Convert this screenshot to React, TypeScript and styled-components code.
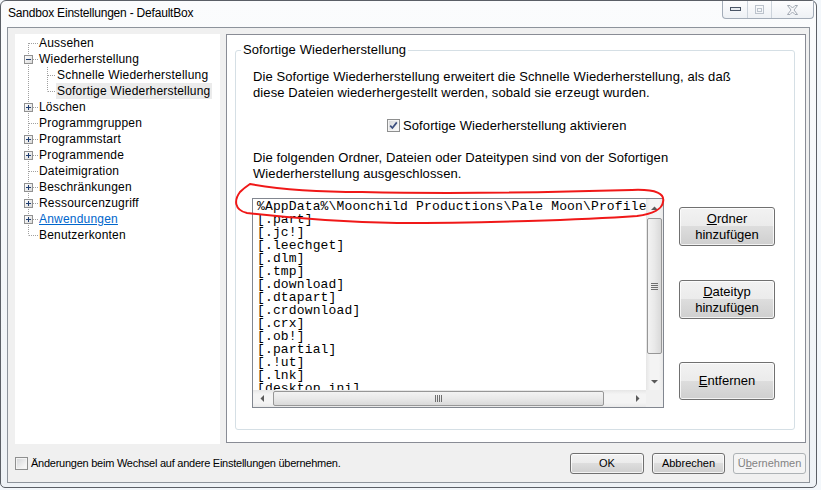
import React from 'react';
import styled, { createGlobalStyle } from 'styled-components';

const GlobalStyle = createGlobalStyle`
    html, body {
        margin: 0;
        padding: 0;
    }
    body {
        width: 821px;
        height: 490px;
        overflow: hidden;
        background: #f3f7fb;
        font-family: 'Liberation Sans', Arial, sans-serif;
        color: #000;
    }
`;

const Window = styled.div`
    width: 817px;
    height: 488px;
    box-sizing: border-box;
    border: 1px solid #5b5f66;
    border-radius: 6px 6px 5px 5px;
    background: linear-gradient(180deg, #fbfcfd 0%, #eef2f6 100%);
    display: flex;
    flex-direction: column;
`;

const TitleBar = styled.div`
    height: 26px;
    flex: none;
    display: flex;
    justify-content: space-between;
    align-items: flex-start;
    padding: 0 2px 0 7px;
`;

const Title = styled.span`
    font-size: 12px;
    letter-spacing: -0.2px;
    line-height: 24px;
`;

const CaptionGroup = styled.div`
    display: flex;
    height: 17px;
    border: 1px solid #a3acb8;
    border-top: none;
    border-radius: 0 0 4px 4px;
    overflow: hidden;
    background: linear-gradient(180deg, #fdfdfe, #eef1f5);
`;

const CaptionButton = styled.div<{ $w: number }>`
    width: ${(p) => p.$w}px;
    display: flex;
    align-items: center;
    justify-content: center;

    & + & {
        border-left: 1px solid #ccd3db;
    }
`;

const Client = styled.div`
    flex: 1;
    margin: 0 6px 4px 6px;
    border: 1px solid #8d939b;
    background: #f0f0f0;
    display: flex;
    flex-direction: column;
`;

const Main = styled.div`
    display: flex;
    align-items: flex-start;
    gap: 6px;
    height: 410px;
    padding: 6px 3px 0 7px;
`;

// 트리 영역
const Tree = styled.ul`
    width: 205px;
    height: 410px;
    flex: none;
    margin: 0;
    padding: 1px 0 0 0;
    box-sizing: border-box;
    list-style: none;
    background: #fff;
`;

const TreeRow = styled.li`
    display: flex;
    height: 16px;
`;

const TreeLabel = styled.span<{ $selected?: boolean; $link?: boolean }>`
    padding: 0 2px 0 1px;
    font-size: 12px;
    letter-spacing: 0.2px;
    line-height: 16px;
    white-space: nowrap;
    background: ${(p) => (p.$selected ? '#ebebeb' : 'transparent')};
    color: ${(p) => (p.$link ? '#0066cc' : '#000')};
    text-decoration: ${(p) => (p.$link ? 'underline' : 'none')};
`;

const Panel = styled.div`
    flex: 1;
    height: 409px;
    box-sizing: border-box;
    border: 1px solid #898c95;
    background: #fff;
    padding: 8px 10px 12px 8px;
`;

const Group = styled.fieldset`
    margin: 0;
    padding: 0;
    min-width: 0;
    height: 100%;
    box-sizing: border-box;
    border: 1px solid #d5dfe5;
    border-radius: 3px;
`;

const Legend = styled.legend`
    margin-left: 5px;
    padding: 0 2px;
    font-size: 13px;
    line-height: 14px;
    letter-spacing: 0.1px;
`;

const GroupBody = styled.div`
    padding: 12px 0 0 17px;
`;

const Text = styled.p<{ $mt?: number }>`
    margin: ${(p) => p.$mt || 0}px 0 0 0;
    font-size: 13px;
    line-height: 16px;
    letter-spacing: 0.1px;
    white-space: nowrap;
`;

const CheckRow = styled.label<{ $mt?: number; $ml?: number }>`
    display: flex;
    align-items: center;
    gap: 3px;
    height: 16px;
    margin: ${(p) => p.$mt || 0}px 0 0 ${(p) => p.$ml || 0}px;
    font-size: 13px;
    letter-spacing: 0.1px;
    white-space: nowrap;
`;

const CheckBox = styled.span`
    width: 13px;
    height: 13px;
    flex: none;
    box-sizing: border-box;
    border: 1px solid #8e8f8f;
    background: linear-gradient(135deg, #d2d4d7 0%, #f2f2f2 70%, #fbfbfb 100%);
    box-shadow: inset 0 0 0 1px #f4f4f4;
    display: flex;
    align-items: center;
    justify-content: center;
`;

const ListRow = styled.div`
    position: relative;
    display: flex;
    gap: 15px;
    margin: 16px 0 0 -1px;
`;

const ListBox = styled.div`
    width: 412px;
    height: 210px;
    box-sizing: border-box;
    border: 1px solid #828790;
    background: #fff;
    display: grid;
    grid-template-columns: 1fr 17px;
    grid-template-rows: 1fr 17px;
`;

const ListItems = styled.div`
    overflow: hidden;
    padding: 1px 0 0 4px;
`;

const ListItem = styled.div`
    font-family: 'Liberation Mono', 'Courier New', monospace;
    font-size: 13px;
    line-height: 13px;
    letter-spacing: 0.15px;
    white-space: nowrap;
`;

const ScrollBar = styled.div<{ $vertical?: boolean }>`
    display: flex;
    flex-direction: ${(p) => (p.$vertical ? 'column' : 'row')};
    background: ${(p) =>
        p.$vertical
            ? 'linear-gradient(90deg, #e6e6e6 0, #f4f4f4 25%, #f4f4f4 75%, #e9e9e9 100%)'
            : 'linear-gradient(180deg, #e6e6e6 0, #f4f4f4 25%, #f4f4f4 75%, #e9e9e9 100%)'};
`;

const ScrollArrow = styled.div`
    width: 17px;
    height: 17px;
    flex: none;
    display: flex;
    align-items: center;
    justify-content: center;
`;

const ScrollTrack = styled.div<{ $vertical?: boolean }>`
    flex: 1;
    display: flex;
    flex-direction: ${(p) => (p.$vertical ? 'column' : 'row')};
    padding: ${(p) => (p.$vertical ? '2px 0 0 0' : '0 0 0 3px')};
`;

const Thumb = styled.div<{ $vertical?: boolean }>`
    box-sizing: border-box;
    border: 1px solid #979797;
    border-radius: 2px;
    display: flex;
    align-items: center;
    justify-content: center;
    ${(p) =>
        p.$vertical
            ? `width: 15px; height: 136px; margin-left: 1px;
               background: linear-gradient(90deg, #f3f3f3 0%, #e9e9e9 50%, #d9d9d9 100%);`
            : `height: 15px; width: 331px; margin-top: 1px;
               background: linear-gradient(180deg, #f3f3f3 0%, #e9e9e9 50%, #d9d9d9 100%);`}
`;

const Corner = styled.div`
    background: #f0f0f0;
`;

const ButtonColumn = styled.div`
    display: flex;
    flex-direction: column;
    padding-top: 9px;
`;

const Button = styled.button<{ $w: number; $h: number; $mt?: number; $small?: boolean }>`
    width: ${(p) => p.$w}px;
    height: ${(p) => p.$h}px;
    margin-top: ${(p) => p.$mt || 0}px;
    padding: 0;
    box-sizing: border-box;
    border: 1px solid #707070;
    border-radius: 3px;
    background: linear-gradient(180deg, #f2f2f2 0%, #ebebeb 50%, #dddddd 50%, #cfcfcf 100%);
    box-shadow: inset 0 0 0 1px rgba(255, 255, 255, 0.75);
    font-family: 'Liberation Sans', Arial, sans-serif;
    font-size: ${(p) => (p.$small ? 11 : 13)}px;
    line-height: 16px;
    color: #000;

    &:disabled {
        border-color: #adb2b5;
        background: #f4f4f4;
        box-shadow: none;
        color: #838383;
    }
`;

const BottomBar = styled.div`
    display: flex;
    align-items: center;
    height: 38px;
    padding: 0 3px 0 7px;
`;

const BottomLabel = styled.label`
    display: flex;
    align-items: center;
    gap: 3px;
    font-size: 11px;
    letter-spacing: -0.25px;
    white-space: nowrap;
`;

const DialogButtons = styled.div`
    margin-left: auto;
    display: flex;
    gap: 8px;
`;

const Annotation = styled.svg`
    position: absolute;
    left: -20px;
    top: -16px;
    pointer-events: none;
    overflow: visible;
`;

interface TreeNode {
    label: string;
    level: 0 | 1;
    toggle?: 'plus' | 'minus';
    selected?: boolean;
    link?: boolean;
    first?: boolean;
    last?: boolean;
    lastChild?: boolean;
}

const treeNodes: TreeNode[] = [
    { label: 'Aussehen', level: 0, first: true },
    { label: 'Wiederherstellung', level: 0, toggle: 'minus' },
    { label: 'Schnelle Wiederherstellung', level: 1 },
    { label: 'Sofortige Wiederherstellung', level: 1, selected: true, lastChild: true },
    { label: 'Löschen', level: 0, toggle: 'plus' },
    { label: 'Programmgruppen', level: 0 },
    { label: 'Programmstart', level: 0, toggle: 'plus' },
    { label: 'Programmende', level: 0, toggle: 'plus' },
    { label: 'Dateimigration', level: 0 },
    { label: 'Beschränkungen', level: 0, toggle: 'plus' },
    { label: 'Ressourcenzugriff', level: 0, toggle: 'plus' },
    { label: 'Anwendungen', level: 0, toggle: 'plus', link: true },
    { label: 'Benutzerkonten', level: 0, last: true },
];

const listEntries = [
    '%AppData%\\Moonchild Productions\\Pale Moon\\Profiles',
    '[.part]',
    '[.jc!]',
    '[.leechget]',
    '[.dlm]',
    '[.tmp]',
    '[.download]',
    '[.dtapart]',
    '[.crdownload]',
    '[.crx]',
    '[.ob!]',
    '[.partial]',
    '[.!ut]',
    '[.lnk]',
    '[desktop.ini]',
];

const DOT = '#a0a0a0';

function Connector({ node }: { node: TreeNode }) {
    const width = node.level === 0 ? 23 : 41;
    const trunkTop = node.first ? 8 : 0;
    const trunkBottom = node.last ? 8.5 : 16;
    return (
        <svg width={width} height={16} style={{ flex: 'none' }}>
            <line x1={13.5} y1={trunkTop} x2={13.5} y2={trunkBottom} stroke={DOT} strokeDasharray="1 1" />
            {node.level === 0 && (
                <line x1={node.toggle ? 18 : 14} y1={8.5} x2={23} y2={8.5} stroke={DOT} strokeDasharray="1 1" />
            )}
            {node.level === 1 && (
                <>
                    <line x1={32.5} y1={0} x2={32.5} y2={node.lastChild ? 8.5 : 16} stroke={DOT} strokeDasharray="1 1" />
                    <line x1={33} y1={8.5} x2={41} y2={8.5} stroke={DOT} strokeDasharray="1 1" />
                </>
            )}
            {node.toggle && (
                <>
                    <defs>
                        <linearGradient id="boxfill" x1="0" y1="0" x2="1" y2="1">
                            <stop offset="0" stopColor="#ffffff" />
                            <stop offset="1" stopColor="#d9d9d9" />
                        </linearGradient>
                    </defs>
                    <rect x={9.5} y={4.5} width={8} height={8} fill="url(#boxfill)" stroke="#919191" />
                    <line x1={11} y1={8.5} x2={16} y2={8.5} stroke="#1f3d70" />
                    {node.toggle === 'plus' && <line x1={13.5} y1={6} x2={13.5} y2={11} stroke="#1f3d70" />}
                </>
            )}
        </svg>
    );
}

function Check({ checked }: { checked?: boolean }) {
    return (
        <CheckBox>
            {checked && (
                <svg width={9} height={9} viewBox="0 0 9 9">
                    <path d="M1.2 4.6 L3.4 7 L7.8 1.4" fill="none" stroke="#3b4e7e" strokeWidth={1.7} />
                </svg>
            )}
        </CheckBox>
    );
}

function Arrow({ dir }: { dir: 'up' | 'down' | 'left' | 'right' }) {
    const points = {
        up: '0,4 3.5,0.5 7,4',
        down: '0,0 3.5,3.5 7,0',
        left: '4,0 0.5,3.5 4,7',
        right: '0,0 3.5,3.5 0,7',
    }[dir];
    const horizontal = dir === 'left' || dir === 'right';
    return (
        <ScrollArrow>
            <svg width={horizontal ? 4 : 7} height={horizontal ? 7 : 4}>
                <polygon points={points} fill="#5a5a5a" />
            </svg>
        </ScrollArrow>
    );
}

function Grip({ vertical }: { vertical?: boolean }) {
    return (
        <svg width={7} height={7}>
            {[0, 2, 4, 6].map((o) =>
                vertical ? (
                    <line key={o} x1={0} y1={o + 0.5} x2={7} y2={o + 0.5} stroke="#6e6e6e" strokeWidth={1} />
                ) : (
                    <line key={o} x1={o + 0.5} y1={0} x2={o + 0.5} y2={7} stroke="#6e6e6e" strokeWidth={1} />
                )
            )}
        </svg>
    );
}

function App() {
    return (
        <>
            <GlobalStyle />
            <Window>
                <TitleBar>
                    <Title>Sandbox Einstellungen - DefaultBox</Title>
                    <CaptionGroup>
                        <CaptionButton $w={24}>
                            <svg width={11} height={5}>
                                <rect x={0.5} y={0.5} width={10} height={3} fill="#e6eaef" stroke="#4a5566" />
                            </svg>
                        </CaptionButton>
                        <CaptionButton $w={23}>
                            <svg width={9} height={9}>
                                <rect x={0.5} y={0.5} width={8} height={8} fill="none" stroke="#bcc3cc" />
                                <rect x={2.5} y={3.5} width={4} height={3} fill="none" stroke="#bcc3cc" />
                            </svg>
                        </CaptionButton>
                        <CaptionButton $w={41}>
                            <svg width={11} height={10}>
                                <path
                                    d="M0.5 0.5 H3 L5.5 3 L8 0.5 H10.5 L7 5 L10.5 9.5 H8 L5.5 7 L3 9.5 H0.5 L4 5 Z"
                                    fill="#f6f7f9"
                                    stroke="#a2a9b3"
                                />
                            </svg>
                        </CaptionButton>
                    </CaptionGroup>
                </TitleBar>

                <Client>
                    <Main>
                        <Tree>
                            {treeNodes.map((node) => (
                                <TreeRow key={node.label}>
                                    <Connector node={node} />
                                    <TreeLabel $selected={node.selected} $link={node.link}>
                                        {node.label}
                                    </TreeLabel>
                                </TreeRow>
                            ))}
                        </Tree>

                        <Panel>
                            <Group>
                                <Legend>Sofortige Wiederherstellung</Legend>
                                <GroupBody>
                                    <Text>
                                        Die Sofortige Wiederherstellung erweitert die Schnelle Wiederherstellung, als daß
                                        <br />
                                        diese Dateien wiederhergestellt werden, sobald sie erzeugt wurden.
                                    </Text>
                                    <CheckRow $mt={16} $ml={134}>
                                        <Check checked />
                                        Sofortige Wiederherstellung aktivieren
                                    </CheckRow>
                                    <Text $mt={17}>
                                        Die folgenden Ordner, Dateien oder Dateitypen sind von der Sofortigen
                                        <br />
                                        Wiederherstellung ausgeschlossen.
                                    </Text>
                                    <ListRow>
                                        <ListBox>
                                            <ListItems>
                                                {listEntries.map((entry) => (
                                                    <ListItem key={entry}>{entry}</ListItem>
                                                ))}
                                            </ListItems>
                                            <ScrollBar $vertical>
                                                <Arrow dir="up" />
                                                <ScrollTrack $vertical>
                                                    <Thumb $vertical>
                                                        <Grip vertical />
                                                    </Thumb>
                                                </ScrollTrack>
                                                <Arrow dir="down" />
                                            </ScrollBar>
                                            <ScrollBar>
                                                <Arrow dir="left" />
                                                <ScrollTrack>
                                                    <Thumb>
                                                        <Grip />
                                                    </Thumb>
                                                </ScrollTrack>
                                                <Arrow dir="right" />
                                            </ScrollBar>
                                            <Corner />
                                        </ListBox>
                                        <ButtonColumn>
                                            <Button $w={96} $h={39}>
                                                <u>O</u>rdner
                                                <br />
                                                hinzufügen
                                            </Button>
                                            <Button $w={96} $h={39} $mt={34}>
                                                <u>D</u>ateityp
                                                <br />
                                                hinzufügen
                                            </Button>
                                            <Button $w={96} $h={38} $mt={43}>
                                                <u>E</u>ntfernen
                                            </Button>
                                        </ButtonColumn>
                                        <Annotation width={440} height={46}>
                                            <path
                                                d="M18,2 C40,6 80,10 130,10 C220,12 330,10 400,8 C425,7 433,12 431,20 C430,28 420,32 405,34 C350,38 250,41 165,41 C100,40 50,35 15,31 C2,28 2,18 8,10 C12,6 15,4 18,2"
                                                fill="none"
                                                stroke="#f01818"
                                                strokeWidth={2}
                                                strokeLinecap="round"
                                            />
                                        </Annotation>
                                    </ListRow>
                                </GroupBody>
                            </Group>
                        </Panel>
                    </Main>

                    <BottomBar>
                        <BottomLabel>
                            <Check />
                            Änderungen beim Wechsel auf andere Einstellungen übernehmen.
                        </BottomLabel>
                        <DialogButtons>
                            <Button $w={74} $h={21} $small>
                                OK
                            </Button>
                            <Button $w={73} $h={21} $small>
                                Abbrechen
                            </Button>
                            <Button $w={73} $h={21} $small disabled>
                                Ü<u>b</u>ernehmen
                            </Button>
                        </DialogButtons>
                    </BottomBar>
                </Client>
            </Window>
        </>
    );
}

export default App;
